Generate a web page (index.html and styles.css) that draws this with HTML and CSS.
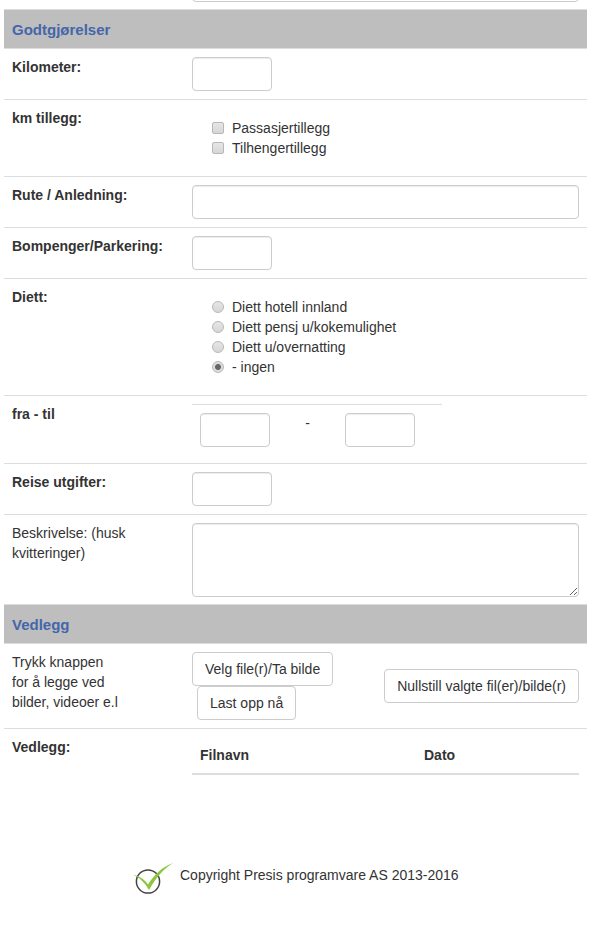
FILE: index.html
```html
<!DOCTYPE html>
<html lang="no">
<head>
<meta charset="utf-8">
<title>Godtgjørelser</title>
<link rel="stylesheet" href="styles.css">
</head>
<body>
<form class="page">
  <div class="row row-top"><div class="label"></div><div class="field"><input class="input input-full" type="text"></div></div>
  <h2 class="section">Godtgjørelser</h2>
  <div class="row"><div class="label strong">Kilometer:</div><div class="field"><input class="input input-small" type="text"></div></div>
  <div class="row row-km"><div class="label strong">km tillegg:</div>
    <div class="field options">
      <label class="option"><input class="check" type="checkbox">Passasjertillegg</label>
      <label class="option"><input class="check" type="checkbox">Tilhengertillegg</label>
    </div>
  </div>
  <div class="row"><div class="label strong">Rute / Anledning:</div><div class="field"><input class="input input-full" type="text"></div></div>
  <div class="row"><div class="label strong">Bompenger/Parkering:</div><div class="field"><input class="input input-small" type="text"></div></div>
  <div class="row row-diett"><div class="label strong">Diett:</div>
    <div class="field options">
      <label class="option"><input class="radio" type="radio" name="diett">Diett hotell innland</label>
      <label class="option"><input class="radio" type="radio" name="diett">Diett pensj u/kokemulighet</label>
      <label class="option"><input class="radio" type="radio" name="diett">Diett u/overnatting</label>
      <label class="option"><input class="radio" type="radio" name="diett" checked>- ingen</label>
    </div>
  </div>
  <div class="row row-range"><div class="label strong">fra - til</div>
    <div class="field">
      <div class="range">
        <input class="input input-range" type="text">
        <span class="dash">-</span>
        <input class="input input-range" type="text">
      </div>
    </div>
  </div>
  <div class="row"><div class="label strong">Reise utgifter:</div><div class="field"><input class="input input-small" type="text"></div></div>
  <div class="row row-text"><div class="label">Beskrivelse: (husk kvitteringer)</div><div class="field"><textarea class="input textarea"></textarea></div></div>
  <h2 class="section">Vedlegg</h2>
  <div class="row row-upload"><div class="label">Trykk knappen<br>for å legge ved<br>bilder, videoer e.l</div>
    <div class="field upload">
      <div class="upload-left">
        <button class="btn" type="button">Velg file(r)/Ta bilde</button>
        <button class="btn btn-offset" type="button">Last opp nå</button>
      </div>
      <button class="btn" type="button">Nullstill valgte fil(er)/bilde(r)</button>
    </div>
  </div>
  <div class="row row-files"><div class="label strong">Vedlegg:</div>
    <div class="field">
      <div class="files"><span class="col-name">Filnavn</span><span class="col-date">Dato</span></div>
    </div>
  </div>
  <footer class="footer">
    <svg class="logo" width="42" height="36" viewBox="0 0 42 36" aria-hidden="true">
      <circle cx="15" cy="19.5" r="11.6" fill="none" stroke="#444" stroke-width="1.5"/>
      <path d="M0 12.5 C6 14 11 17 15 22.5 C21 13 29 5 40 1 C30 7 22 17 16 28 C12 21 7 16 0 12.5 Z" fill="#8cc63f"/>
    </svg>
    <span class="copy">Copyright Presis programvare AS 2013-2016</span>
  </footer>
</form>
</body>
</html>
```
FILE: styles.css
```css
* { box-sizing: border-box; }
html, body { margin: 0; padding: 0; height: 925px; overflow: hidden; background: #fff; }
body { font-family: "Liberation Sans", Arial, sans-serif; font-size: 14px; line-height: 20px; color: #333; }
.page { margin: 0 8px 0 4px; }
.row { display: flex; padding: 8px; border-bottom: 1px solid #ddd; }
.row-top { margin-top: -40px; padding-bottom: 7px; }
.label { width: 180px; flex: none; padding-right: 15px; }
.strong { font-weight: 700; }
.field { flex: 1; min-width: 0; }
.section { margin: 0; height: 39px; padding: 10px 8px 8px; font-size: 15px; line-height: 20px; font-weight: 700; color: #4466aa; background: #bebebe; border-bottom: 1px solid #ddd; }
.input { display: block; height: 34px; padding: 6px 12px; background: #fff; border: 1px solid #ccc; border-radius: 4px; box-shadow: inset 0 1px 1px rgba(0,0,0,.075); font: inherit; color: #555; }
.input-small { width: 80px; }
.input-full { width: 100%; }
.input-range { width: 70px; }
.textarea { width: 100%; height: 74px; resize: vertical; }
.options { padding: 10px 0 10px 20px; display: flex; flex-direction: column; }
.option { display: flex; align-items: center; height: 20px; font-weight: 400; }
.check, .radio { appearance: none; -webkit-appearance: none; flex: none; width: 12px; height: 12px; margin: 0 8px 0 0; border: 1px solid #b8b8b8; background: linear-gradient(#e6e6e6, #d6d6d6); }
.check { border-radius: 2px; }
.radio { border-radius: 50%; }
.radio:checked { background: radial-gradient(circle, #666 0 2.5px, #dcdcdc 3.5px); }
.range { display: flex; align-items: flex-start; border-top: 1px solid #ddd; width: 250px; padding: 8px; }
.dash { width: 75px; text-align: center; line-height: 20px; }
.row-text { padding-bottom: 7px; }
.upload { display: flex; justify-content: space-between; align-items: center; }
.upload-left { display: flex; flex-direction: column; align-items: flex-start; }
.btn { display: block; height: 34px; padding: 6px 12px; background: #fff; border: 1px solid #ccc; border-radius: 4px; font: inherit; color: #333; }
.btn-offset { margin-left: 5px; }
.files { display: flex; height: 38px; padding: 8px; border-bottom: 2px solid #ddd; font-weight: 700; }
.col-name { width: 224px; }
.row-files { border-bottom: 0; }
.footer { display: flex; margin-top: 82px; padding-left: 129px; }
.logo { flex: none; margin-top: -3px; }
.copy { margin-left: 5px; }
```
